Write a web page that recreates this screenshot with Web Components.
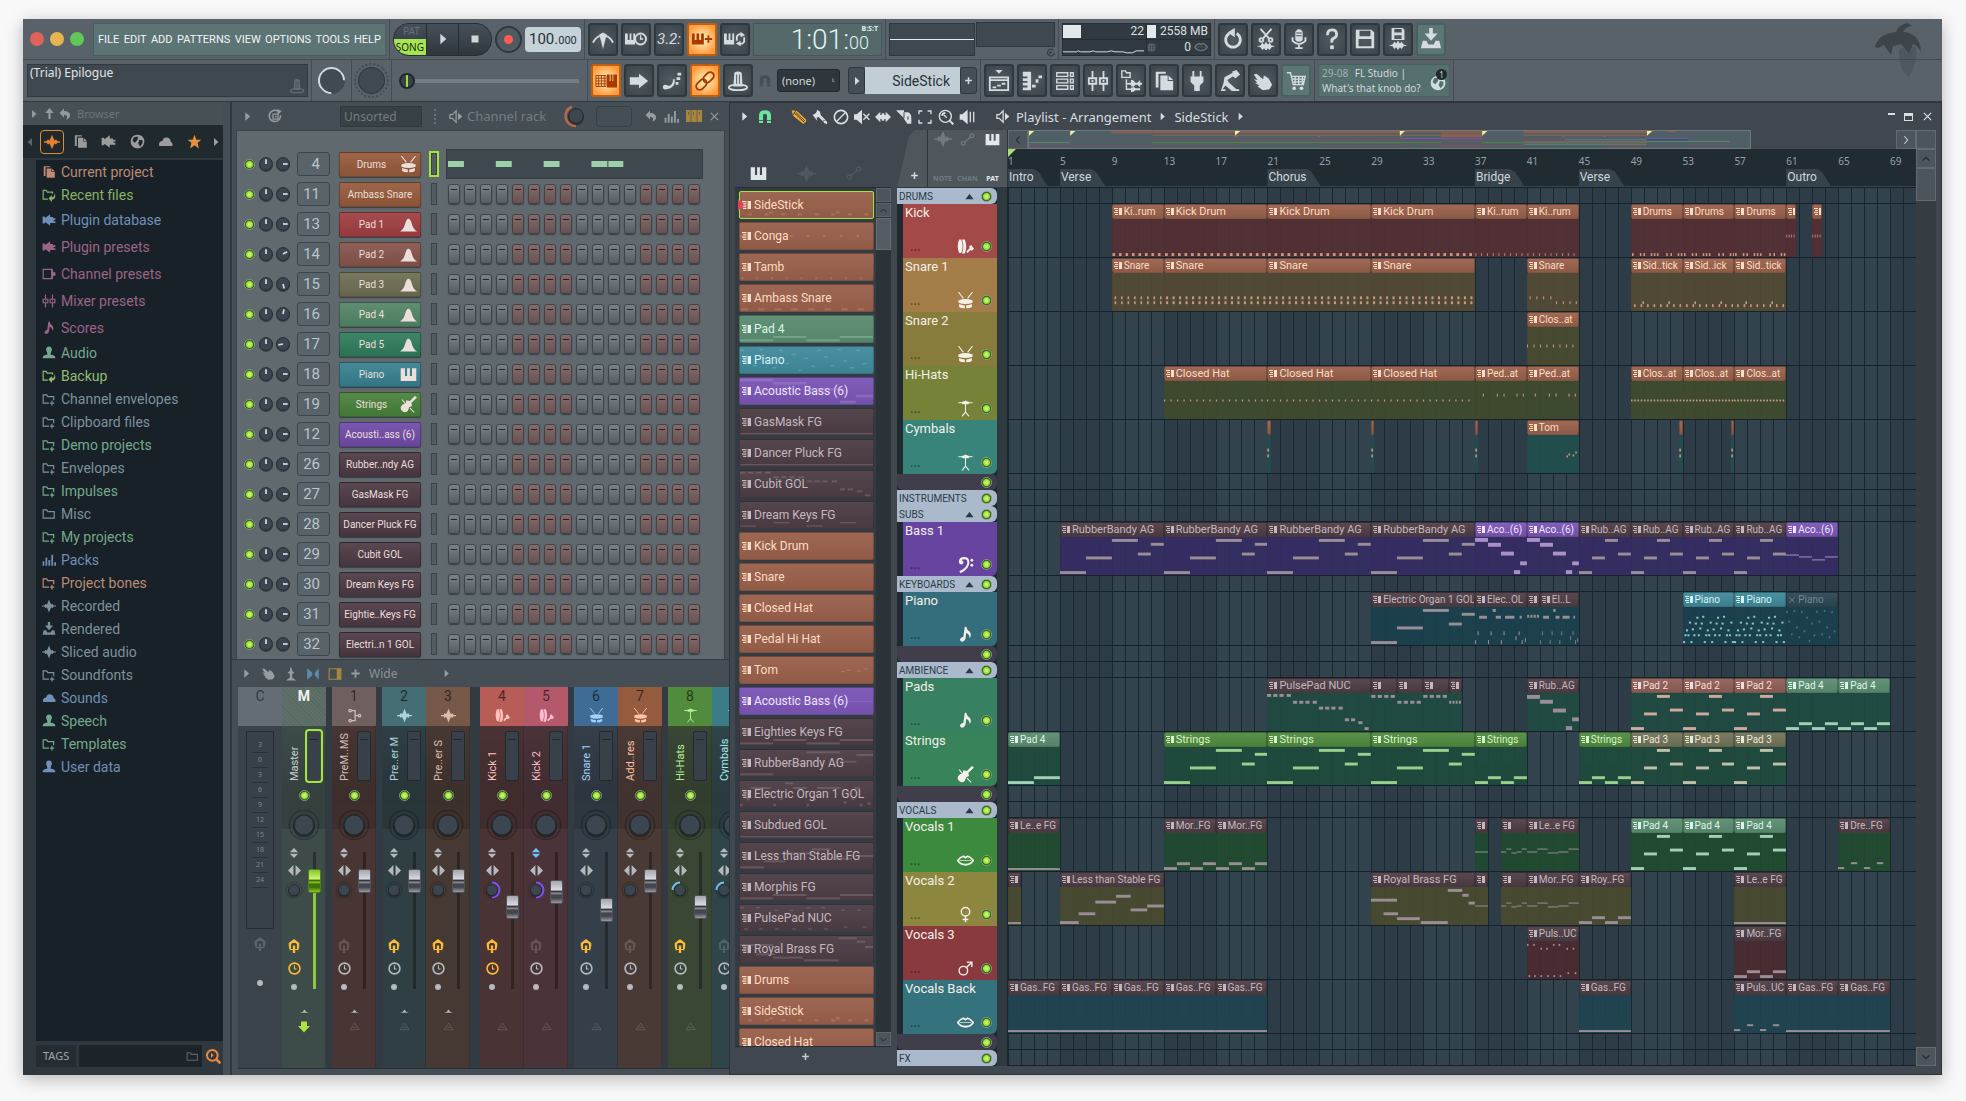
<!DOCTYPE html>
<html lang="en">
<head>
<meta charset="utf-8">
<title>Epilogue</title>
<style>
  body {
    margin: 0;
    background: #f8f8f8;
    font-family: Roboto, "Noto Sans", sans-serif;
    color: #d3d9dd;
  }
</style>
</head>
<body>
<daw-app></daw-app>
<script>
const WIDE = '"Noto Sans", "Open Sans", sans-serif';

/* ---------- icons, all on a 24 unit square ---------- */
const line = (d, w = 2) => `<path d="${d}" fill="none" stroke="currentColor" stroke-width="${w}"/>`;
const fill = (d) => `<path d="${d}" fill-rule="evenodd"/>`;
const ring = (cx, cy, r, w = 2) => `<circle cx="${cx}" cy="${cy}" r="${r}" fill="none" stroke="currentColor" stroke-width="${w}"/>`;

const ICONS = {
  right: fill("M8 4l9 8-9 8z"),
  left: fill("M16 4l-9 8 9 8z"),
  up: fill("M12 2l8 9h-6v11h-4V11H4z"),
  stop: fill("M5 5h14v14H5z"),
  undo: fill("M10 1v5c8 0 12 4 12 9 0 4-3 7-8 8 4-4 3-9-4-9v5L1 10z"),
  piano: fill("M1 3h6v11h3V3h4v11h3V3h6v18H1z"),
  wave: fill("M0 11h4l2-3 2 2 2-4 2-5 2 5 2 4 2-2 2 3h4v2h-4l-2 3-2-2-2 4-2 5-2-5-2-4-2 2-2-3H0z"),
  metronome: line("M1 16Q5 8 12 8T23 16", 2) + fill("M8 7l4-2 4 2-4 16z"),
  pianoclock: fill("M0 6h3v7h2V6h2v7h2V6h2v12H0z") + ring(17, 12, 6) + line("M17 8v4h3", 1.5),
  pianoplus: fill("M1 6h3v7h2V6h3v7h2V6h3v12H1zM18 8h2v3h3v2h-3v3h-2v-3h-3v-2h3z"),
  pianoloop: fill("M0 6h3v7h2V6h2v7h2V6h2v12H0z") + line("M14 14V9q3-4 7-1M22 10v5q-3 4-7 1", 2) + fill("M18 4l5 4-5 2zM18 14l-5 3 5 3z"),
  keys: line("M1 6h11v12H1zM1 9h11M1 12h11M1 15h11M4 6v12M7 6v12M10 6v12", 1) + fill("M13 5h3v7h1V5h2v7h1V5h4v14H13z"),
  arrow: fill("M2 8h10V4l10 8-10 8v-4H2z"),
  glide: fill("M2 18a3 3 0 0 1 5-1q5 1 6-5v-2h2v4q-1 6-9 7-4 1-4-3zM18 3h4v3h-4zM17 8h4v3h-4zM16 13h3v3h-3z"),
  link: '<g transform="rotate(-45 12 12)">' + '<rect x="0" y="8" width="13" height="8" rx="4" fill="none" stroke="currentColor" stroke-width="2"/><rect x="11" y="8" width="13" height="8" rx="4" fill="none" stroke="currentColor" stroke-width="2"/>' + "</g>",
  jack: fill("M8 3q4-3 8 0l1 15H7zM10 5v11h1V5zM13 5v11h1V5z") + '<ellipse cx="12" cy="19" rx="10" ry="3" fill="none" stroke="currentColor" stroke-width="2"/>',
  magnet: fill("M3 21V10Q3 2 12 2t9 8v11h-6V10q0-3-3-3t-3 3v11zM3 17h6v1H3zM15 17h6v1h-6z"),
  step: fill("M8 0h8l-4 4z") + line("M2 8h20v14H2zM2 11h20", 2) + fill("M5 18h4v2H5zM10 16h4v2h-4zM15 14h4v2h-4z"),
  roll: fill("M2 2h9v20H2v-3h5v-2H2v-3h5v-2H2V9h5V7H2zM12 16h4v3h-4zM16 10h3v4h-3zM19 6h4v3h-4z"),
  rack: line("M3 3h12v4H3zM18 3h3v4h-3zM3 10h12v4H3zM18 10h3v4h-3zM3 17h12v4H3zM18 17h3v4h-3z", 1.5),
  mixer: line("M6 1v8M6 15v8M18 1v8M18 15v8M2 9h8v6H2zM14 9h8v6h-8z", 2) + fill("M5 11h2v2H5zM17 11h2v2h-2z"),
  tree: line("M2 1h4l1 2h4v5H2zM7 10v11h5M7 15h5", 1.5) + fill("M12 11h2l3 3h2l3-3v3h2v2h-2v3l-3-3h-2l-3 3h-2v-3h-2v-2h2zM12 18h2l3 2h5v2h-5l-3 2h-2z"),
  pages: fill("M3 2h11v2H6v15H3zM8 6h8v6h6v10H8zM17 6l5 5h-5z"),
  plug: fill("M7 1h2v6h6V1h2v6h2v6l-4 4v6H9v-6l-4-4V7h2z"),
  tool: fill("M14 2l5-2 4 5-5 4-3-2-6 4 2 3 8 7h3v2h-8l-7-6-3 4h3v2H2l3-9 1-6 9-5z"),
  hand: fill("M2 5l3-1 7 6 1-4 5 3 4 7-3 5-7 1-6-4 2-1-5-3 3 0-4-4 4 1z"),
  cart: line("M2 3h4l3 13h11l2-9H7M8 10h13M9 13h11M11 7v9M15 7v9M19 7v9", 1.5) + '<circle cx="10" cy="20" r="2"/><circle cx="18" cy="20" r="2"/>',
  redo: line("M8 6a8 8 0 1 0 8 0", 3) + fill("M6 5l8-5v10z"),
  cut: line("M6 1l9 10M18 1L9 11", 2) + ring(7, 13, 2) + ring(17, 13, 2) + fill("M2 20l4-1 2-3 2 2 2-3 2 3 2-2 2 3 4 1-4 1-2 3-2-2-2 3-2-3-2 2-2-3z"),
  mic: fill("M8 4q4-6 8 0v9q-4 4-8 0zM9 5v1h6V5zM9 8v1h6V8z") + line("M5 10v4q7 7 14 0v-4M12 17v5M8 22h8", 2),
  help: line("M7 8q0-6 5-6t5 5q0 3-3 4t-2 5", 3) + fill("M10 19h4v4h-4z"),
  save: fill("M2 2h17l3 3v17H2zM6 3v6h12V3zM5 12v8h14v-8z"),
  savewave: fill("M5 0h12l2 2v11H5zM8 1v4h8V1zM8 8v4h8V8zM2 19l4-1 2-3 2 2 2-3 2 3 2-2 2 3 4 1-4 1-2 3-2-2-2 3-2-3-2 2-2-3z"),
  download: fill("M10 0h4v6h5l-7 8-7-8h5zM3 14h4l2 4h6l2-4h4l2 8H1z"),
  speaker: line("M3 9h4l6-6v18l-6-6H3z", 2) + fill("M16 6l7 6-7 6z"),
  mute: fill("M0 8h4l8-7v22l-8-7H0z") + line("M14 7l9 9M23 7l-9 9", 2),
  play2: fill("M1 8h4l8-7v22l-8-7H1zM16 4h2v16h-2zM21 4h2v16h-2z"),
  pencil: fill("M1 2l8 1 14 13q0 5-5 6L3 10z") + '<path d="M5 6l15 14M7 5l14 13M7 3L3 9" fill="none" stroke="#40474e" stroke-width="1.5"/>',
  brush: fill("M1 9l5-3 2-5 4 3 1 5 7 7-3 3-7-7-3 1 1 5zM17 16l5 2 1 5-5-2z"),
  slash: ring(12, 12, 10, 2.5) + line("M5 19L19 5"),
  slip: fill("M0 12l8-8v5h2V7l2-1 2 1v2h2V4l8 8-8 8v-5h-2v2l-2 1-2-1v-2H8v5z"),
  slice: fill("M0 2h12v3h6q5 2 5 8v9h-6l-5-7V14z") + '<path d="M12 5v9M18 11v5" stroke="#40474e" stroke-width="1.5"/>',
  select: line("M3 8V3h5M16 3h5v5M21 16v5h-5M8 21H3v-5", 2),
  zoom: ring(11, 11, 9) + line("M17 17l6 6", 3) + line("M6 10q1-4 5-4", 3) + line("M9 9l4 4", 2),
  auto: ring(5, 18, 3) + ring(19, 6, 3) + line("M7 16l10-8"),
  plugside: fill("M1 6h3l2 2 8-6v5h5v2h4v3h-3v2h3v3h-4v0h-5v5l-8-6-2 2H1z"),
  globe: fill("M12 1a11 11 0 1 0 .1 0zM6 5l7-1-1 5-4 5-4-3zM15 9l5 1 0 5-4 5-3-5z"),
  cloud: fill("M2 19q-2-7 5-8 2-7 9-5 4 1 4 6 4 2 3 7z"),
  star: fill("M12 1l3 8h8l-6 5 2 9-7-5-7 5 2-9-6-5h8z"),
  folderback: line("M10 19H2V4h5l2 3h9v3", 2) + fill("M11 18l6-6v4q5 0 4-8 5 10-4 12v4z"),
  folder: line("M12 19H2V5h6l2 3h10v6", 2) + line("M17 15v8M14 19h7", 2),
  folderplain: line("M2 19V5h6l2 3h11v11z", 2),
  channel: line("M2 4h15v16H2z", 2) + fill("M16 4h3v16h-3zM19 9h4v6h-4z"),
  note: fill("M11 1h2q1 5 5 7 3 4 0 9-1-6-5-7l-1 8q-2 5-6 4-4-3 1-6l2-1z"),
  user: fill("M12 1q5 0 5 6l-2 5v3q8 0 8 6H1q0-6 8-6v-3L7 7q0-6 5-6z"),
  drum: line("M2 0l7 9M22 0l-7 9", 1.5) + fill("M2 12q10-4 20 0v3q-10 4-20 0zM3 17q4 2 8 2v4q-6 0-8-2zM13 19q4 0 8-2v4q-2 2-8 2z"),
  kick: fill("M3 2h3q4 10 0 19H3q-4-9 0-19zM7 2h4q4 10 0 20H7q4-10 0-20zM13 19l5-5-1-2 3-2 4 5-3 3-2-1-4 4z"),
  cymbal: line("M2 4h20M12 1v17M7 23l5-6 5 6", 1.5) + fill("M6 3l6-2 6 2-2 3H8z"),
  bell: fill("M0 22Q5 19 7 12Q9 4 12 4T17 12Q19 19 24 22z"),
  bass: line("M4 9Q4 3 10 3t6 6q0 8-12 14", 3) + '<circle cx="6" cy="9" r="3"/><circle cx="21" cy="6" r="2"/><circle cx="21" cy="13" r="2"/>',
  violin: fill("M21 0l3 2-8 8 1 4-4 2-2 5q-5 4-9-1-3-5 2-8l4-2 1-4 5 1z") + line("M3 5l4 5M14 17l6 6", 1.5),
  mouth: line("M1 12q4-5 8-6l3 2 3-2q4 1 8 6-4 6-11 6T1 12z", 2.5) + line("M4 12h16", 1),
  female: ring(12, 8, 6) + line("M12 14v9M8 19h8"),
  male: ring(9, 15, 6) + line("M13 11l8-8M14 3h7v7"),
  route: ring(5, 4, 2) + ring(5, 20, 2) + ring(20, 12, 2) + line("M7 4h6v16H7M13 12h5"),
  swap: fill("M2 2l9 8v4l-9 8zM22 2l-7 8v4l7 8z"),
  dock: line("M2 3h20v18H2z", 2) + fill("M15 3h7v18h-7z"),
  stand: fill("M11 1h2l1 6 4 3-4 2v6l7 5H3l7-5v-6l-4-2 4-3z"),
  plus: fill("M10 3h4v7h7v4h-7v7h-4v-7H3v-4h7z"),
  bars: fill("M1 14h3v8H1zM6 8h3v14H6zM11 12h3v10h-3zM16 3h3v19h-3zM21 16h3v6h-3z"),
  steps: fill("M0 3h7v18H0zM8 3h8v18H8zM17 3h7v18h-7zM3 6v4h1V6zM11 6v4h1V6zM20 6v4h1V6z"),
  close: line("M4 4l16 16M20 4L4 20", 2.5),
  chip: line("M5 3h14v18H5zM1 7h4M1 12h4M1 17h4M19 7h4M19 12h4M19 17h4M8 3v18M12 3v18M16 3v18", 2),
  eye: line("M20 8a8 8 0 1 0 2 5", 3) + '<circle cx="13" cy="13" r="3"/>',
  spin: line("M20 10a9 9 0 1 1-5-7", 2.5) + fill("M14 0l8 3-6 6z") + line("M8 8h8v8H8zM11 12h3", 2),
  mag: ring(11, 11, 8, 3) + line("M17 17l6 6", 4) + fill("M9 7l4 4-4 4z"),
  vsplit: fill("M12 0l10 10H2zM2 14h20L12 24z"),
  hsplit: fill("M10 2v20L0 12zM14 2l10 10-10 10z"),
  send: fill("M12 0l9 7v6l-2 7-2-2V9l-2-2H9L7 9v9l-2 2-2-7V7zM10 11h4v6h3v2h-3v5h-4v-5H7v-2h3z"),
  clock: ring(12, 12, 10, 3) + line("M12 6v7h4", 2),
  chevup: fill("M0 18q9-2 12-9 3 7 12 9z"),
  tri: line("M12 5l10 14H2zM8 14h8", 2),
  down: fill("M6 1h12v9h6L12 23 0 10h6z"),
  fold: fill("M12 5l11 14H1z"),
  caretup: line("M4 16l8-8 8 8", 2.5),
  caretdown: line("M4 8l8 8 8-8", 2.5),
  caretleft: line("M16 3l-8 9 8 9", 2.5),
  caretright: line("M8 3l8 9-8 9", 2.5),
  pattern: fill("M0 0h12v3H0zM3 6h9v3H3zM0 12h12v3H0zM3 18h9v3H3zM15 0h9v21h-9z")
};

/* ---------- note shapes of a clip, on 100 x 39 units ---------- */
const dots = (n, y, w, h = 3, off = 1) =>
  Array.from({ length: n }, (_, i) => [(i * 100) / n + off, y, w, h]);
const runs = (...ys) => ys.map((y, i) => [(i * 100) / ys.length, y, 100 / ys.length, 3]);
const thin = (...ys) => ys.map((y, i) => [(i * 100) / ys.length, y, 100 / ys.length, 1]);
const scatter = (n, w, rows) => Array.from({ length: n }, (_, i) => [(i * 97) / n, rows[i % rows.length], w, 2]);

const NOTES = {
  none: [],
  kick4: dots(8, 35, 5),
  kick: dots(16, 35, 2.6),
  kicksoft: dots(9, 35, 1.5),
  drums: [2, 17, 24, 38, 44, 50, 68, 76, 90, 96].map((x) => [x, 35, 3, 3]),
  hit: dots(4, 16, 8, 3, 4),
  snare4: dots(8, 24, 3, 3, 5).concat(dots(8, 29, 3, 3, 5)),
  snare: dots(16, 24, 2, 3, 2).concat(dots(16, 29, 2, 3, 2)),
  snaresoft: [[5, 24, 2, 3], [18, 24, 2, 3], [31, 24, 2, 3], [45, 24, 2, 3], [56, 29, 2, 3], [69, 29, 2, 3], [82, 29, 2, 3], [94, 29, 2, 3]],
  side: dots(8, 32, 3, 3, 6).concat([[22, 29, 3, 3], [72, 29, 3, 3]]),
  hat: dots(16, 19, 1.2, 2, 0),
  hat4: dots(16, 19, 3, 2, 0),
  hatsoft: [15, 42, 55, 80, 92].map((x) => [x, 13, 2, 3]),
  clos: dots(8, 18, 2, 3, 0),
  tick: [[10, 14, 50, 3], [10, 20, 50, 3]],
  tom: [[76, 21, 3, 2], [80, 19, 3, 2], [88, 20, 3, 2], [93, 17, 3, 2]],
  riff8: [[0, 35, 25, 3], [25, 20, 25, 3], [50, 2, 25, 3], [75, 16, 12.5, 3], [87.5, 6, 12.5, 3]],
  riff: [[0, 35, 25, 3], [25, 20, 25, 3], [50, 2, 25, 3], [75, 16, 25, 3]],
  aco: [[0, 1, 25, 4], [25, 6, 25, 4], [50, 15, 25, 4], [75, 34, 12, 4], [87, 25, 13, 4]],
  acothin: thin(18, 20, 23, 20),
  pad2: runs(35, 30),
  pad: runs(35, 30, 35, 30),
  pulse: [[0, 1], [6, 1], [12, 1], [19, 1], [25, 8], [31, 8], [37, 8], [44, 8], [50, 14], [56, 14], [62, 14], [69, 14], [75, 26], [81, 26], [88, 29], [94, 35]].map(([x, y]) => [x, y, 4, 3]),
  pulsea: dots(4, 2, 16),
  pulseb: dots(4, 8, 16),
  fall: [[0, 2, 25, 4], [25, 7, 25, 4], [50, 16, 25, 4], [75, 34, 12, 4], [87, 25, 13, 4]],
  organ: [[8, 9, 15, 3], [34, 2, 6, 3], [40, 9, 10, 3], [58, 9, 18, 3], [86, 9, 4, 3]].concat([[0, 34], [5, 25], [25, 34], [30, 25], [50, 34], [55, 25], [78, 30], [84, 25], [90, 34], [96, 32]].map(([x, y]) => [x, y, 2, 4])),
  piano: scatter(34, 4, [35, 28, 23, 28, 15, 35, 22, 28, 16, 10, 28, 21, 16, 9]),
  pianosoft: scatter(20, 3, [4, 14, 27, 3, 20, 30, 4, 24, 10, 34, 16, 28]),
  less: thin(19, 16, 20, 19, 16),
  short: thin(19),
  low: [[0, 36, 100, 2]],
  stable: [[0, 35, 18, 3], [18, 26, 16, 3], [34, 14, 20, 3], [54, 8, 14, 3], [68, 22, 16, 3], [84, 18, 16, 3]],
  royal: [[0, 12, 25, 3], [12, 26, 14, 3], [25, 31, 22, 3], [48, 35, 26, 3], [74, 2, 14, 3], [88, 7, 6, 3], [94, 15, 6, 3]],
  dots3: [0, 12, 26, 37, 50, 61, 76, 88].map((x, i) => [x, i % 4 < 2 ? 3 : 7, 3, 2]).concat([3, 14, 26, 39, 51, 63, 78, 92].map((x, i) => [x, i < 6 ? 35 : 32, 3, 2])),
  blips: [[0, 35, 12, 2], [25, 30, 12, 2], [50, 35, 12, 2], [75, 30, 12, 2]]
};

/* clip head, clip text, notes */
const COLORS = {
  orange: ["#98604a", "#ffdcc4", "#d6a48a"],
  dark: ["#4d3c44", "#c4b8be", "#a5979f"],
  purple: ["#7a55b4", "#f0e4ff", "#b79ad6"],
  green: ["#4f8a3f", "#d8f5c8", "#a5e094"],
  sage: ["#5a8c70", "#dcf5e6", "#aee0c4"],
  rose: ["#8e5e56", "#f5dcd6", "#e0b4a8"],
  olive: ["#717259", "#e8e8d4", "#cfcfb4"],
  cyan: ["#40899a", "#d4f4fa", "#8fdadf"],
  mute: ["#2c4652", "#71868f", "#557782"]
};

/* ---------- song data: [name, colour, bar, bars, notes] ---------- */
const at = (name, color, notes, len, ...bars) => bars.map((b) => [name, color, b, len, notes]);
const TRACKS = [
  { group: "DRUMS", fold: true },
  { name: "Kick", color: "#a34a49", body: "#552e34", icon: "kick", clips: [
    ...at("Ki..rum", "orange", "kick4", 4, 9), ...at("Kick Drum", "orange", "kick", 8, 13, 21, 29),
    ...at("Ki..rum", "orange", "kicksoft", 4, 37, 41), ...at("Drums", "orange", "drums", 4, 49, 53, 57),
    ...at("", "orange", "hit", 0.75, 61, 63)] },
  { name: "Snare 1", color: "#a37c48", body: "#544a33", icon: "drum", clips: [
    ...at("Snare", "orange", "snare4", 4, 9), ...at("Snare", "orange", "snare", 8, 13, 21, 29),
    ...at("Snare", "orange", "snaresoft", 4, 41), ...at("Sid..tick", "orange", "side", 4, 49),
    ...at("Sid..ick", "orange", "side", 4, 53), ...at("Sid..tick", "orange", "side", 4, 57)] },
  { name: "Snare 2", color: "#877c3c", body: "#484b2e", icon: "drum", clips: at("Clos..at", "orange", "clos", 4, 41) },
  { name: "Hi-Hats", color: "#758238", body: "#404b2c", icon: "cymbal", clips: [
    ...at("Closed Hat", "orange", "hat", 8, 13, 21, 29), ...at("Ped..at", "orange", "hatsoft", 4, 37, 41),
    ...at("Clos..at", "orange", "hat4", 4, 49, 53, 57)] },
  { name: "Cymbals", color: "#38847a", body: "#20504e", icon: "cymbal", last: true, clips: [
    ...at("", "orange", "tick", 0.25, 21, 29, 37, 52.75, 56.75), ...at("Tom", "orange", "tom", 4, 41)] },
  { blank: true },
  { group: "INSTRUMENTS" },
  { group: "SUBS", fold: true },
  { name: "Bass 1", color: "#6644a0", body: "#362c64", icon: "bass", last: true, clips: [
    ...at("RubberBandy AG", "dark", "riff8", 8, 5, 13, 21, 29), ...at("Aco..(6)", "purple", "aco", 4, 37, 41),
    ...at("Rub..AG", "dark", "riff", 4, 45, 49, 53, 57), ...at("Aco..(6)", "purple", "acothin", 4, 61)] },
  { group: "KEYBOARDS", fold: true },
  { name: "Piano", color: "#346e7c", body: "#1b404e", icon: "note", last: true, clips: [
    ...at("Electric Organ 1 GOL", "dark", "riff8", 8, 29), ...at("Elec..OL", "dark", "organ", 4, 37),
    ...at("", "dark", "pulseb", 1, 41), ...at("El..L", "dark", "organ", 3, 42),
    ...at("Piano", "cyan", "piano", 4, 53, 57), ...at("Piano", "mute", "pianosoft", 4, 61)] },
  { blank: true },
  { group: "AMBIENCE", fold: true },
  { name: "Pads", color: "#378062", body: "#1f4b41", icon: "note", clips: [
    ...at("PulsePad NUC", "dark", "pulse", 8, 21), ...at("", "dark", "pulsea", 2, 29), ...at("", "dark", "pulseb", 2, 31),
    ...at("", "dark", "pulsea", 2, 33), ...at("", "dark", "pulseb", 1, 35), ...at("Rub..AG", "dark", "fall", 4, 41),
    ...at("Pad 2", "rose", "riff", 4, 49, 53, 57), ...at("Pad 4", "sage", "pad", 4, 61, 65)] },
  { name: "Strings", color: "#37845a", body: "#1f4b3c", icon: "violin", last: true, clips: [
    ...at("Pad 4", "sage", "pad2", 4, 1), ...at("Strings", "green", "riff8", 8, 13, 21, 29),
    ...at("Strings", "green", "pad", 4, 37, 45), ...at("Pad 3", "olive", "riff", 4, 49, 53, 57)] },
  { blank: true },
  { group: "VOCALS", fold: true },
  { name: "Vocals 1", color: "#3c8a3e", body: "#204b2f", icon: "mouth", clips: [
    ...at("Le..e FG", "dark", "low", 4, 1), ...at("Mor..FG", "dark", "pad", 4, 13, 17),
    ...at("", "dark", "short", 1, 37), ...at("", "dark", "less", 2, 39), ...at("Le..e FG", "dark", "less", 4, 41),
    ...at("Pad 4", "sage", "riff", 4, 49, 53, 57), ...at("Dre..FG", "dark", "blips", 4, 65)] },
  { name: "Vocals 2", color: "#8d863e", body: "#4a4b2e", icon: "female", clips: [
    ...at("", "dark", "low", 1, 1), ...at("Less than Stable FG", "dark", "stable", 8, 5),
    ...at("Royal Brass FG", "dark", "royal", 8, 29), ...at("", "dark", "short", 1, 37), ...at("", "dark", "less", 2, 39),
    ...at("Mor..FG", "dark", "less", 4, 41), ...at("Roy..FG", "dark", "pad", 4, 45), ...at("Le..e FG", "dark", "low", 4, 57)] },
  { name: "Vocals 3", color: "#883a3e", body: "#4c2a30", icon: "male", clips: [
    ...at("Puls..UC", "dark", "dots3", 4, 41), ...at("Mor..FG", "dark", "pad", 4, 57)] },
  { name: "Vocals Back", color: "#34727e", body: "#1f4450", icon: "mouth", last: true, clips: [
    ...at("Gas..FG", "dark", "low", 4, 1, 5, 9, 13, 17, 45), ...at("Puls..UC", "dark", "blips", 4, 57),
    ...at("Gas..FG", "dark", "low", 4, 61, 65)] },
  { blank: true },
  { group: "FX" }
];

const PATTERNS = [
  ["SideStick", "orange", "side"], ["Conga", "orange", "clos"], ["Tamb", "orange", "kicksoft"], ["Ambass Snare", "orange", "kick4"],
  ["Pad 4", "sage", "pad"], ["Piano", "cyan", "pianosoft"], ["Acoustic Bass (6)", "purple", "aco"],
  ["GasMask FG", "dark", "low"], ["Dancer Pluck FG", "dark", "low"], ["Cubit GOL", "dark", "pulse"], ["Dream Keys FG", "dark", "blips"],
  ["Kick Drum", "orange", "none"], ["Snare", "orange", "none"], ["Closed Hat", "orange", "none"], ["Pedal Hi Hat", "orange", "none"],
  ["Tom", "orange", "tom"], ["Acoustic Bass (6)", "purple", "acothin"], ["Eighties Keys FG", "dark", "pad"],
  ["RubberBandy AG", "dark", "riff8"], ["Electric Organ 1 GOL", "dark", "organ"], ["Subdued GOL", "dark", "low"],
  ["Less than Stable FG", "dark", "stable"], ["Morphis FG", "dark", "pad"], ["PulsePad NUC", "dark", "dots3"],
  ["Royal Brass FG", "dark", "royal"], ["Drums", "orange", "none"], ["SideStick", "orange", "side"], ["Closed Hat", "orange", "none"]
];

const CHANNELS = [
  [4, "Drums", "#95593a", 90, "drum"], [11, "Ambass Snare", "#95593a", 90], [13, "Pad 1", "#9e3d40", 90, "bell"],
  [14, "Pad 2", "#855349", 60, "bell"], [15, "Pad 3", "#6c6c50", 165, "bell"], [16, "Pad 4", "#518465", 12, "bell"],
  [17, "Pad 5", "#2e7a5a", 260, "bell"], [18, "Piano", "#367e8e", 90, "piano"], [19, "Strings", "#467f38", 90, "violin"],
  [12, "Acousti..ass (6)", "#6e4aa6", 90], [26, "Rubber..ndy AG", "#4b3842", 90], [27, "GasMask FG", "#4b3842", 90],
  [28, "Dancer Pluck FG", "#4b3842", 90], [29, "Cubit GOL", "#4b3842", 90], [30, "Dream Keys FG", "#4b3842", 90],
  [31, "Eightie..Keys FG", "#4b3842", 90], [32, "Electri..n 1 GOL", "#4b3842", 90]
];

const STRIPS = [
  { no: "M", name: "Master", head: "#5f7069", body: "#3d4b49", text: "#c4d4cc", fader: 85, master: true, send: 1, clock: 1, up: 1 },
  { gap: 6 },
  { no: "1", name: "PreM..MS", head: "#6f5f5f", body: "#473633", text: "#d4bdb8", icon: "route", fader: 85, up: 1 },
  { gap: 6 },
  { no: "2", name: "Pre..er M", head: "#456d74", body: "#2f3f44", text: "#a8d4dc", icon: "wave", fader: 85, send: 1, up: 1 },
  { no: "3", name: "Pre..er S", head: "#765848", body: "#463833", text: "#dcbca8", icon: "wave", fader: 85, send: 1, up: 1 },
  { gap: 10 },
  { no: "4", name: "Kick 1", head: "#b85c58", body: "#4a3335", text: "#ffc4bc", icon: "kick", fader: 62, send: 1, clock: 1, ring: "#7c50ff" },
  { no: "5", name: "Kick 2", head: "#b4586c", body: "#4a3339", text: "#ffbcd0", icon: "kick", fader: 75, ring: "#7c50ff", stereo: true },
  { gap: 6 },
  { no: "6", name: "Snare 1", head: "#3f6c94", body: "#343f4a", text: "#a4d0ff", icon: "drum", fader: 59, send: 1 },
  { no: "7", name: "Add..res", head: "#945b3f", body: "#4a3a36", text: "#ffc4a4", icon: "drum", fader: 85 },
  { gap: 6 },
  { no: "8", name: "Hi-Hats", head: "#538b3e", body: "#3a4735", text: "#b0f494", icon: "cymbal", fader: 62, send: 1, ring: "#70c0e8" },
  { no: "", name: "Cymbals", head: "#3b7d87", body: "#304549", text: "#a4e8f0", icon: "cymbal", fader: 62, ring: "#70c0e8" }
];

const FOLDERS = [
  ["Current project", "pages", "#bd8b75"], ["Recent files", "folderback", "#86b268"],
  ["Plugin database", "plugside", "#6f90b8", 1], ["Plugin presets", "plugside", "#9c6488", 1],
  ["Channel presets", "channel", "#9c6488", 1], ["Mixer presets", "mixer", "#9c6488", 1], ["Scores", "note", "#9c6488", 1],
  ["Audio", "user", "#74a98c"], ["Backup", "folderback", "#94bc70"], ["Channel envelopes", "folder", "#7c919c"],
  ["Clipboard files", "folder", "#7c919c"], ["Demo projects", "folder", "#74a98c"], ["Envelopes", "folder", "#7c919c"],
  ["Impulses", "folder", "#74a98c"], ["Misc", "folderplain", "#7c919c"], ["My projects", "folder", "#74a98c"],
  ["Packs", "bars", "#6f90b8"], ["Project bones", "folder", "#bd8b75"], ["Recorded", "wave", "#7c919c"],
  ["Rendered", "download", "#7c919c"], ["Sliced audio", "wave", "#7c919c"], ["Soundfonts", "folder", "#7c919c"],
  ["Sounds", "cloud", "#6f90b8"], ["Speech", "user", "#74a98c"], ["Templates", "folder", "#74a98c"], ["User data", "user", "#6f90b8"]
];

/* ---------- base ---------- */
class DawElement extends HTMLElement {
  constructor() {
    super();
    this.attachShadow({ mode: "open" });
  }

  connectedCallback() {
    this.shadowRoot.innerHTML = `
      <style>
        * { box-sizing: border-box; }
        :host { display: block; box-sizing: border-box; min-width: 0; }
        button, input, select { font: inherit; color: inherit; margin: 0; padding: 0; border: 0; background: none; border-radius: 0; }
        button { display: flex; align-items: center; justify-content: center; }
        ${this.styles()}
      </style>
      ${this.markup()}`;
  }

  attr(name, fallback = "") {
    return this.getAttribute(name) || fallback;
  }

  styles() { return ""; }
  markup() { return "<slot></slot>"; }
}

const icon = (name, size = 16, extra = "") => `<daw-icon name="${name}" size="${size}" ${extra}></daw-icon>`;

function noteShapes(name, color, opacity = 1) {
  const rects = NOTES[name].map(([x, y, w, h]) => `<rect x="${x}" y="${y}" width="${w}" height="${h}"/>`).join("");
  return `<svg viewBox="0 0 100 39" preserveAspectRatio="none" fill="${color}" opacity="${opacity}" aria-hidden="true">${rects}</svg>`;
}

class DawIcon extends DawElement {
  styles() {
    return `:host { flex: none; width: ${this.attr("size", 16)}px; height: ${this.attr("size", 16)}px; }
      svg { display: block; width: 100%; height: 100%; }`;
  }
  markup() {
    return `<svg viewBox="0 0 24 24" fill="currentColor" aria-hidden="true">${ICONS[this.attr("name")]}</svg>`;
  }
}

class DawLed extends DawElement {
  styles() {
    return `:host {
      flex: none; width: 11px; height: 11px; border-radius: 50%;
      border: 1px solid #88988c;
      background: radial-gradient(circle, #c8f070 0 20%, #8fdc2c 48%, #224a10 68%);
    }`;
  }
  markup() { return ""; }
}

class DawKnob extends DawElement {
  styles() {
    const s = this.attr("size", 14);
    return `:host { flex: none; width: ${s}px; height: ${s}px; }
      svg { display: block; overflow: visible; }`;
  }
  markup() {
    const s = this.attr("size", 14);
    const arc = this.attr("ring");
    const half = this.attr("half", "right");
    return `<svg width="${s}" height="${s}" viewBox="0 0 24 24">
      ${this.hasAttribute("halo") ? '<circle cx="12" cy="12" r="16" fill="none" stroke="#0004" stroke-width="1.5"/>' : ""}
      ${arc ? `<path d="${half === "right" ? "M12-3a15 15 0 0 1 0 30" : half === "left" ? "M12 27a15 15 0 0 1-6-29" : "M-3 12a15 15 0 0 1 15-15"}" fill="none" stroke="${arc}" stroke-width="4"/>` : ""}
      <circle cx="12" cy="14" r="12" fill="#0005"/>
      <circle cx="12" cy="12" r="11" fill="#3c4650" stroke="#20282e" stroke-width="1.5"/>
      ${this.hasAttribute("angle") ? `<path d="M12 4v8" stroke="#d0d8dc" stroke-width="3" transform="rotate(${this.attr("angle")} 12 12)"/>` : ""}
    </svg>`;
  }
}

/* Square toolbar button, kind: "", "on" or "teal" */
class ToolButton extends DawElement {
  styles() {
    return `
      :host { flex: none; width: 30px; height: 33px; }
      button {
        width: 100%; height: 100%;
        border: 2px solid #30383f; border-radius: 3px;
        background: radial-gradient(circle, #525b62, #3b444b);
        color: #d5dce0;
      }
      :host([kind="on"]) button {
        border-color: #c0600f; color: #a83a00;
        background: radial-gradient(circle, #ffe2a4 20%, #ff9a3c 80%);
      }
      :host([kind="teal"]) button { background: #5b7674; border-color: #466260; }
      ::slotted(i) { font-size: 15px; }`;
  }
  markup() { return `<button aria-label="${this.attr("label")}"><slot></slot></button>`; }
}

const tool = (name, kind = "") =>
  `<tool-button kind="${kind}" label="${name}">${icon(name, 22)}</tool-button>`;

/* ---------- toolbars ---------- */
class MainToolbar extends DawElement {
  styles() {
    return `
      :host { display: flex; height: 41px; border-bottom: 1px solid #434c54; background: #5a6269; }
      .cell { display: flex; align-items: center; gap: 3px; padding: 3px; border-right: 1px solid #434c54; }
      .lights { gap: 6px; border: 0; padding: 0 9px 0 7px; width: 70px; }
      .lights button { width: 14px; height: 14px; border-radius: 50%; }
      nav {
        display: flex; justify-content: space-between; align-items: center;
        width: 293px; height: 33px; padding: 0 4px;
        background: #5d7474; border: 1px solid #48605f;
        font-size: 11px; color: #f0f6f6;
      }
      .transport { display: flex; border-radius: 16px; overflow: hidden; border: 1px solid #262e34; width: 99px; height: 33px; gap: 1px; background: #262e34; }
      .transport > * { flex: 1; background: linear-gradient(#47505a, #2f373d); color: #d0d5d8; }
      .transport .mode { display: flex; flex-direction: column; align-items: stretch; font: 10px/16px ${WIDE}; text-align: center; }
      .mode span { color: #687077; padding-left: 3px; }
      .mode b { font-weight: 400; color: #1a2a08; background: #a6e454; }
      .record { width: 27px; height: 27px; border-radius: 50%; border: 2px solid #30383e; background: #515a61; }
      .record::before { content: ""; width: 9px; height: 9px; border-radius: 50%; background: #ff5c54; }
      .tempo { width: 56px; height: 25px; line-height: 25px; border-radius: 4px; background: #c5d2d8; color: #283238; font-size: 15px; padding-left: 4px; white-space: nowrap; }
      .tempo small { font-size: 11px; }
      .time { display: flex; align-items: baseline; justify-content: flex-end; position: relative; width: 129px; height: 33px; padding-right: 12px; background: #55696a; border: 1px solid #445858; color: #dff4f2; font-size: 28px; line-height: 32px; font-weight: 300; }
      .time small { font-size: 18px; }
      .time sup { position: absolute; right: 3px; top: 0; font: bold 7px/10px ${WIDE}; }
      .scope { width: 86px; height: 33px; border: 1px solid #30383f; background: linear-gradient(#d8f0f0, #d8f0f0) 0 50% / 100% 1px no-repeat #40484f; }
      .peak { display: flex; flex-direction: column; align-items: flex-end; width: 77px; color: #343c43; }
      .peak::before { content: ""; width: 77px; height: 23px; background: #40484f; border: 1px solid #30383f; }
      .cpu { display: grid; grid-template: 15px 15px / 83px 63px; width: 149px; height: 33px; padding: 1px; gap: 1px; background: #262e34; font-size: 12px; line-height: 15px; color: #d8e0e4; white-space: nowrap; }
      .cpu > * { display: flex; align-items: center; justify-content: flex-end; gap: 3px; background: #323a41; padding-right: 2px; }
      .cpu .load { justify-content: space-between; }
      .cpu .load::before { content: ""; width: 18px; height: 13px; background: #e2e8ea; }
      .cpu .mem::before { width: 9px; }
      .cpu .dim { color: #687076; }
      .cpu .zero { flex: 1; text-align: right; }
      .cpu svg { width: 82px; height: 14px; }
      .fruit { margin-left: auto; width: 68px; color: #3d454b; }
      .fruit svg { display: block; width: 48px; height: 60px; position: relative; z-index: 1; }`;
  }
  markup() {
    const menu = ["FILE", "EDIT", "ADD", "PATTERNS", "VIEW", "OPTIONS", "TOOLS", "HELP"];
    return `
      <div class="cell lights">
        <button aria-label="Close" style="background:#e0635a"></button>
        <button aria-label="Minimize" style="background:#e6b450"></button>
        <button aria-label="Zoom" style="background:#5fc858"></button>
      </div>
      <div class="cell" style="padding-left:0"><nav>${menu.map((m) => `<button>${m}</button>`).join("")}</nav></div>
      <div class="cell">
        <div class="transport">
          <button class="mode"><span>PAT</span><b>SONG</b></button>
          <button aria-label="Play">${icon("right", 16)}</button>
          <button aria-label="Stop">${icon("stop", 12)}</button>
        </div>
        <button class="record" aria-label="Record"></button>
        <div class="tempo">100.<small>000</small></div>
      </div>
      <div class="cell">${tool("metronome")}${tool("pianoclock")}<tool-button label="Countdown"><i>3.2:</i></tool-button>${tool("pianoplus", "on")}${tool("pianoloop")}
        <div class="time">1:01:<small>00</small><sup>B:S:T</sup></div>
      </div>
      <div class="cell"><div class="scope"></div><div class="peak">${icon("eye", 10)}</div></div>
      <div class="cell">
        <div class="cpu">
          <div class="load">22</div><div class="load mem">2558 MB</div>
          <div><svg viewBox="0 0 84 14">${line("M0 12h14l2-1 2 1h10l3-1 3 1h12l4-1 4 1h8l4 1 6 0 4-2 8 0", 1)}</svg></div>
          <div><span class="dim">${icon("chip", 9)}</span><span class="zero">0</span><span class="dim">${icon("mouth", 14)}</span></div>
        </div>
      </div>
      <div class="cell" style="border:0">${["redo", "cut", "mic", "help", "save", "savewave"].map((n) => tool(n)).join("")}${tool("download", "teal")}</div>
      <div class="fruit"><svg viewBox="0 0 48 60" fill="currentColor" aria-hidden="true">
        <path d="M25 30q10-5 17-2 2 14-7 30-11-8-10-28z" opacity=".35"/>
        <path d="M1 28Q4 15 22 13 24 6 34 4l4 3q-7 1-9 6 17 1 18 20-4-7-8-8l-4 9-8-9-8 2-2 9-7-10-6 3z"/>
      </svg></div>`;
  }
}

class SubToolbar extends DawElement {
  styles() {
    return `
      :host { display: flex; height: 41px; background: #5a6269; }
      .cell { display: flex; align-items: center; justify-content: center; gap: 3px; padding: 3px; border-right: 1px solid #434c54; }
      .title { display: flex; justify-content: space-between; align-items: flex-start; width: 281px; height: 33px; padding: 0 2px 2px; background: #40484f; border: 1px solid #323a40; font: 12px/16px ${WIDE}; color: #e0e5e8; }
      .title daw-icon { align-self: flex-end; color: #636c73; }
      .knob { width: 40px; }
      .dial { width: 27px; height: 27px; border-radius: 50%; background: #414a51; border: 2px solid #d0dade; border-right-color: #414a51; transform: rotate(45deg); }
      .dial.dim { border: 1px solid #30383e; outline: 2px dotted #434b52; outline-offset: 2px; }
      .pitch { width: 196px; padding: 0 8px 0 7px; }
      input[type=range] { appearance: none; width: 100%; height: 24px; background: linear-gradient(#747c83, #747c83) 50% 50% / 100% 4px no-repeat; }
      input[type=range]::-webkit-slider-thumb { appearance: none; width: 16px; height: 16px; border-radius: 50%; border: 2px solid #20282d; background: linear-gradient(90deg, transparent 5px, #9ae040 5px 7px, transparent 7px) #39424a; }
      .snap { color: #454e55; width: 18px; display: flex; justify-content: center; }
      select { appearance: none; width: 63px; height: 23px; padding-left: 4px; border: 1px solid #22292e; border-radius: 3px; background: linear-gradient(to top right, #687077 50%, transparent 50%) 54px 8px / 4px 4px no-repeat, #30373c; font: 11px ${WIDE}; color: #d0d6da; }
      .pattern { display: flex; height: 27px; margin-left: 5px; }
      .pattern button { width: 17px; border: 1px solid #30383f; border-radius: 3px; background: #454e55; color: #d5dce0; }
      .pattern input { width: 95px; padding-right: 10px; background: #c2ced5; color: #283238; font-size: 14px; text-align: right; }
      .news { display: flex; justify-content: space-between; align-items: center; width: 132px; height: 33px; padding: 0 3px; background: #567070; border: 1px solid #466060; color: #cfdcdc; font: 10px/15px ${WIDE}; white-space: nowrap; }
      .news span { color: #9fb0b0; margin-right: 4px; }
      .globe { position: relative; align-self: flex-end; margin-bottom: 5px; }
      .globe b { position: absolute; right: -1px; top: -6px; width: 11px; height: 11px; border-radius: 50%; background: #20282c; font: 8px/11px ${WIDE}; text-align: center; }`;
  }
  markup() {
    return `
      <div class="cell" style="padding-left:4px"><div class="title">(Trial) Epilogue ${icon("jack", 16)}</div></div>
      <div class="cell knob"><div class="dial"></div></div>
      <div class="cell knob"><div class="dial dim"></div></div>
      <div class="cell pitch"><input type="range" value="0" aria-label="Main pitch"></div>
      <div class="cell">${tool("keys", "on")}${tool("arrow")}${tool("glide")}${tool("link", "on")}${tool("jack")}
        <span class="snap">${icon("magnet", 14)}</span>
        <select aria-label="Snap"><option>(none)</option></select>
        <div class="pattern">
          <button aria-label="Previous pattern">${icon("right", 12)}</button>
          <input value="SideStick" aria-label="Pattern">
          <button aria-label="Add pattern">${icon("plus", 9)}</button>
        </div>
      </div>
      <div class="cell">${["step", "roll", "rack", "mixer", "tree", "pages", "plug", "tool", "hand"].map((n) => tool(n)).join("")}${tool("cart", "teal")}</div>
      <div class="cell"><div class="news"><div><span>29-08</span> FL Studio |<br>What's that knob do?</div><div class="globe">${icon("globe", 16)}<b>1</b></div></div></div>`;
  }
}

/* ---------- browser ---------- */
class BrowserPanel extends DawElement {
  styles() {
    return `
      :host { display: flex; flex-direction: column; background: #2f383e; border-right: 7px solid #454e54; }
      header { display: flex; align-items: center; gap: 3px; height: 23px; padding-left: 5px; background: #465055; color: #929a9f; font: 11px ${WIDE}; }
      header span { color: #6d767b; margin-left: 3px; }
      .tabs { display: flex; align-items: center; justify-content: space-between; height: 33px; padding: 0 2px; background: #20292e; color: #9c9c9c; }
      .tabs button { width: 24px; height: 24px; }
      .tabs .edge { width: 10px; }
      .tabs .on { border: 1px solid #e08a3a; border-radius: 4px; color: #e8822c; }
      ul { flex: 1; margin: 2px 0 0 13px; padding: 0; list-style: none; background: #182127; }
      li { display: flex; align-items: center; gap: 5px; height: 23px; padding-left: 6px; font-size: 14px; }
      li.tall { height: 27px; }
      footer { display: flex; align-items: center; height: 34px; padding: 0 2px 4px 13px; gap: 3px; font: 11px ${WIDE}; color: #a0a8ac; }
      footer label { padding: 0 7px; background: #252d32; height: 22px; line-height: 22px; }
      footer .box { display: flex; align-items: center; flex: 1; height: 22px; background: #1c2429; color: #5c666c; padding-right: 3px; }
      footer input { flex: 1; width: 20px; }`;
  }
  markup() {
    return `
      <header>${icon("right", 12)}${icon("up", 13)}${icon("undo", 12)}<span>Browser</span></header>
      <div class="tabs">
        <button class="edge" aria-label="Scroll left" style="color:#596267">${icon("left", 12)}</button>
        <button class="on" aria-label="All">${icon("wave", 16)}</button>
        ${["pages", "plugside", "globe", "cloud"].map((n) => `<button aria-label="${n}">${icon(n, 15)}</button>`).join("")}
        <button aria-label="Favourites" style="color:#e8903a">${icon("star", 15)}</button>
        <button class="edge" aria-label="Scroll right">${icon("right", 12)}</button>
      </div>
      <ul>${FOLDERS.map(([name, ic, color, tall]) => `<li class="${tall ? "tall" : ""}" style="color:${color}">${icon(ic, 14)}${name}</li>`).join("")}</ul>
      <footer><label for="tags">TAGS</label><div class="box"><input id="tags">${icon("folderplain", 13)}</div><span style="color:#e8883a">${icon("mag", 16)}</span></footer>`;
  }
}

/* ---------- channel rack ---------- */
class ChannelRow extends DawElement {
  styles() {
    return `
      :host { display: grid; grid-template-columns: 10px 19px 17px 7px 33px 9px 82px 10px 6px 1fr; align-items: center; height: 30px; padding-left: 7px; }
      .vol { padding-left: 5px; }
      .pan { padding-left: 3px; }
      .no { grid-column: 5; display: flex; align-items: center; justify-content: flex-end; height: 24px; padding-right: 9px; border: 1px solid #3c454b; border-radius: 3px; font-size: 15px; color: #b9c3c9; background: #59636a; }
      .name { grid-column: 7; height: 25px; padding: 0 3px; border: 1px solid #0004; border-radius: 2px; background: linear-gradient(#ffffff14, #00000010) ${this.attr("color")}; box-shadow: 0 1px 1px #0006; color: #ecdfdb; font-size: 10px; white-space: nowrap; }
      .name span { flex: 1; text-align: center; }
      .sel { grid-column: 9; height: 22px; border: 1px solid #3a434a; background: #525b62; }
      .sel.on { outline: 2px solid #a5e43c; }
      .steps { display: flex; gap: 4px; padding-left: 11px; }
      .steps input { appearance: none; width: 12px; height: 20px; border: 1px solid #3c4449; border-radius: 3px; background: linear-gradient(#20262a, #20262a) 50% 4px / 6px 1px no-repeat, linear-gradient(#7b8388, #555d61); box-shadow: 0 1px 1px #0006; }
      .steps input.red { background: linear-gradient(#2c1a1c, #2c1a1c) 50% 4px / 6px 1px no-repeat, linear-gradient(#846a6a, #6a5153); }
      .roll { width: 257px; height: 30px; margin-left: 9px; border: 1px solid #343c43; background: #40484f; }
      .roll svg { display: block; width: 100%; height: 100%; }`;
  }
  markup() {
    const no = this.attr("no");
    const roll = no === "4";
    const steps = Array.from({ length: 16 }, (_, i) =>
      `<input type="checkbox" class="${(i >> 2) % 2 ? "red" : ""}" aria-label="Step ${i + 1}">`).join("");
    return `
      <daw-led></daw-led>
      <span class="vol"><daw-knob angle="0"></daw-knob></span>
      <span class="pan"><daw-knob angle="${this.attr("pan")}"></daw-knob></span>
      <div class="no">${no}</div>
      <button class="name"><span>${this.attr("name")}</span>${this.hasAttribute("icon") ? icon(this.attr("icon"), 17) : ""}</button>
      <div class="sel ${roll ? "on" : ""}"></div>
      ${roll ? `<div class="roll"><svg viewBox="0 0 256 28" fill="#9bd0a8"><path d="M1 11h16v6H1zM49 11h16v6H49zM97 11h16v6H97zM145 11h16v6h-16zM162 11h15v6h-15z"/></svg></div>` : `<div class="steps">${steps}</div>`}`;
  }
}

class ChannelRack extends DawElement {
  styles() {
    return `
      :host { background: #454e54; padding: 0 4px; border-left: 2px solid #30393f; }
      header { display: flex; align-items: center; height: 28px; color: #969da1; font: 13px ${WIDE}; padding: 0 5px; white-space: nowrap; }
      header span { color: #747d82; margin-left: 4px; }
      select { flex: none; appearance: none; width: 82px; height: 21px; padding-left: 3px; margin: 0 12px 0 57px; border: 1px solid #30393e; background: #384146; font: 12px ${WIDE}; color: #747d82; }
      .grip { width: 3px; height: 15px; margin-right: 11px; border-left: 2px dotted #6a7378; }
      .swing { margin: 0 12px 0 22px; display: flex; }
      .field { flex: none; width: 36px; height: 21px; border: 1px solid #363f44; border-radius: 4px; }
      .tail { display: flex; align-items: center; gap: 7px; margin-left: auto; }
      .rows { padding-top: 18px; background: #5f696e; border: 1px solid #3a4348; border-bottom: 0; height: 529px; overflow: hidden; }`;
  }
  markup() {
    return `
      <header>${icon("right", 13)}<i style="width:14px"></i>${icon("spin", 15)}
        <select aria-label="Filter"><option>Unsorted</option></select><i class="grip"></i>
        ${icon("speaker", 15)}<span>Channel rack</span>
        <div class="swing"><daw-knob size="16" ring="#b46a48" half="left"></daw-knob></div>
        <div class="field"></div>
        <div class="tail">${icon("undo", 12)}${icon("bars", 15)}${icon("steps", 16, 'style="color:#a8863c"')}${icon("close", 11)}</div>
      </header>
      <div class="rows">${CHANNELS.map(([no, name, color, pan, ic]) =>
        `<channel-row no="${no}" name="${name}" color="${color}" pan="${pan}" ${ic ? `icon="${ic}"` : ""}></channel-row>`).join("")}</div>`;
  }
}

/* ---------- mixer ---------- */
class MixerStrip extends DawElement {
  get data() { return STRIPS[Number(this.attr("index"))]; }
  styles() {
    const d = this.data;
    return `
      :host { flex: none; width: 44px; background: ${d.body}; box-shadow: inset -1px 0 #0002; overflow: hidden; }
      .head { display: flex; flex-direction: column; align-items: center; height: 39px; background: ${d.head}; color: #0009; font-size: 14px; line-height: 18px; }
      .head daw-icon { color: ${d.text}; margin-top: 3px; }
      .head.master { background: repeating-linear-gradient(45deg, #0000 0 2px, #0001 2px 3px) ${d.head}; color: #f0f4f2; font-weight: bold; }
      .top { display: flex; height: 60px; padding: 5px 5px 5px 4px; justify-content: space-between; background: linear-gradient(#0000, #0002); }
      .name { writing-mode: vertical-rl; transform: rotate(180deg); font-size: 11px; line-height: 18px; height: 50px; color: ${d.text}; white-space: nowrap; }
      .meter { width: 14px; height: 50px; border: 1px solid #222a30; border-radius: 2px; background: linear-gradient(#222a30, #222a30) 50% 7px / 8px 1px no-repeat #38414a; }
      .master.meter { outline: 2px solid #a5e43c; border-color: ${d.body}; }
      .led, .big { display: flex; justify-content: center; align-items: center; height: 19px; background: #0002; }
      .big { height: 40px; background: linear-gradient(#0002 60%, #0000 60%); }
      .ctl { display: grid; grid-template-columns: 24px 1fr; height: 148px; }
      .ctl .col { display: flex; flex-direction: column; align-items: center; color: #b3b9bd; }
      .col > * { display: flex; align-items: center; }
      input { appearance: none; writing-mode: vertical-lr; direction: rtl; width: 16px; height: 137px; margin-top: 7px; background: linear-gradient(#0005, #0005) 50% 50% / 3px 100% no-repeat; }
      input.master { background: linear-gradient(#0005 20%, #8cc83c 20%) 50% 50% / 3px 100% no-repeat; }
      input::-webkit-slider-thumb { appearance: none; width: 13px; height: 24px; border-radius: 2px; border: 1px solid #50545a; background: linear-gradient(#a4a5ad, #d8d9df 40%, #303238 48%, #8d8f97 56%, #44464e 64% 78%, #9a9ba4); }
      input.master::-webkit-slider-thumb { border-color: #50801c; background: linear-gradient(#86c82c, #ccf470 40%, #3c6808 48%, #86c82c 56%, #3f7000 64% 78%, #86c82c); }
      .foot { display: flex; flex-direction: column; align-items: center; gap: 5px; padding-top: 13px; color: #b3b9bd; height: 75px; }`;
  }
  markup() {
    const d = this.data;
    const m = d.master ? "master" : "";
    const dim = "color:#ffffff28";
    const half = d.ring === "#7c50ff" ? "right" : "corner";
    return `
      <div class="head ${m}">${d.no || "&nbsp;"}${d.icon ? icon(d.icon, 15) : ""}</div>
      <div class="top"><div class="name">${d.name}</div><div class="meter ${m}"></div></div>
      <div class="led"><daw-led></daw-led></div>
      <div class="big"><daw-knob size="22" halo></daw-knob></div>
      <div class="ctl">
        <div class="col">
          <span style="height:16px;${d.stereo ? "color:#6cc4ff" : ""}">${icon("vsplit", 10)}</span>
          <span style="height:18px">${icon("hsplit", 13)}</span>
          <span style="height:22px"><daw-knob size="12" halo ${d.ring ? `ring="${d.ring}" half="${half}"` : ""}></daw-knob></span>
          <span style="height:36px"></span>
          <span style="height:18px;${d.send ? "color:#ffba38" : dim}">${icon("send", 14)}</span>
          <span style="height:26px;${d.clock ? "color:#ffba38" : ""}">${icon("clock", 13)}</span>
          <span style="height:12px"><i style="width:6px;height:6px;border-radius:50%;background:#b3b9bd"></i></span>
        </div>
        <input class="${m}" type="range" value="${d.fader}" aria-label="${d.name} volume">
      </div>
      <div class="foot">
        <span style="height:10px">${d.up ? icon("chevup", 9) : ""}</span>
        ${d.master ? icon("down", 12, 'style="color:#a5e43c"') : icon("tri", 11, `style="${dim}"`)}
      </div>`;
  }
}

class MixerPanel extends DawElement {
  styles() {
    return `
      :host { display: flex; flex-direction: column; background: #454e54; border-left: 2px solid #30393f; border-top: 1px solid #343d42; padding-left: 4px; }
      header { display: flex; align-items: center; gap: 8px; height: 27px; padding-left: 4px; color: #969da1; font: 12px ${WIDE}; }
      header span { color: #8a9297; }
      .strips { display: flex; height: 382px; margin: 0 0 6px 2px; overflow: hidden; background: #2a3238; border-bottom: 1px solid #293136; }
      .scale { flex: none; width: 44px; background: #3a424a; color: #a4acb1; }
      .scale .top { height: 39px; background: #656d74; color: #343c42; text-align: center; font-size: 14px; line-height: 18px; }
      .meter { display: flex; flex-direction: column; width: 28px; height: 198px; margin: 5px 8px 8px; padding-top: 6px; border: 1px solid #242c32; border-radius: 2px; background: #384048; font: 7px/14px ${WIDE}; text-align: center; color: #7f888e; }
      .meter span { border-bottom: 1px solid #2a3238; margin: 0 5px; }
      .scale .under { display: flex; flex-direction: column; align-items: center; gap: 29px; color: #5c656c; }
      .under i { width: 6px; height: 6px; border-radius: 50%; background: #b3b9bd; }
      .gap { flex: none; background: #333b42; }`;
  }
  markup() {
    const marks = ["3", "0", "3", "6", "9", "12", "15", "18", "21", "24"];
    return `
      <header>${icon("right", 13)}${icon("hand", 15)}${icon("stand", 14)}${icon("swap", 14, 'style="color:#5a8cac"')}${icon("dock", 14, 'style="color:#a8863c"')}${icon("plus", 11)}<span>Wide</span><i style="width:28px"></i>${icon("right", 11)}</header>
      <div class="strips">
        <div class="scale"><div class="top">C</div><div class="meter">${marks.map((m) => `<span>${m}</span>`).join("")}</div>
          <div class="under">${icon("send", 14)}<i></i></div></div>
        ${STRIPS.map((s, i) => s.gap ? `<div class="gap" style="width:${s.gap}px"></div>` : `<mixer-strip index="${i}"></mixer-strip>`).join("")}
      </div>`;
  }
}

/* ---------- playlist ---------- */
class PatternPicker extends DawElement {
  styles() {
    return `
      :host { display: flex; flex-direction: column; width: 156px; }
      .tabs { display: flex; align-items: center; gap: 30px; height: 57px; padding: 29px 0 0 15px; color: #4f585f; }
      .box { display: flex; height: 860px; border: 1px solid #262e34; border-width: 1px 0; background: #343c43; }
      .list { display: flex; flex-direction: column; gap: 3px; flex: 1; padding: 3px 2px 0 4px; overflow: hidden; }
      .item { flex: none; display: grid; height: 28px; border: 1px solid #0003; border-radius: 2px; font-size: 12px; line-height: 24px; white-space: nowrap; }
      .item > * { grid-area: 1 / 1; }
      .item span { display: flex; align-items: center; gap: 3px; padding-left: 2px; }
      .item svg { width: 100%; height: 26px; }
      .item.on { position: relative; border-color: #a5e43c; }
      .item.on::before { content: ""; position: absolute; left: -2px; top: 7px; border: 6px solid transparent; border-left-color: #e83c5c; border-right: 0; }
      .bar { width: 15px; display: flex; flex-direction: column; gap: 1px; background: #2b3339; color: #20282d; }
      .bar button { height: 14px; background: #4c555c; border: 1px solid #5c656c; }
      .bar i { height: 32px; background: #545d64; border: 1px solid #656e75; }
      .bar button:last-child { margin-top: auto; }
      .add { height: 19px; color: #c6ccd0; width: 100%; padding-right: 15px; }`;
  }
  markup() {
    return `
      <div class="tabs">${icon("piano", 17, 'style="color:#e0e5e8"')}${icon("wave", 19)}${icon("auto", 16)}</div>
      <div class="box">
        <div class="list">${PATTERNS.map(([name, c, notes], i) => `
          <div class="item ${i ? "" : "on"}" style="background:linear-gradient(#ffffff0c,#0000000c) ${COLORS[c][0]};color:${COLORS[c][1]}">
            ${noteShapes(notes, COLORS[c][2], 0.3)}<span>${icon("pattern", 9)}${name}</span></div>`).join("")}</div>
        <div class="bar"><button aria-label="Menu"></button><button aria-label="Up">${icon("caretup", 9)}</button><i></i><button aria-label="Down">${icon("caretdown", 9)}</button></div>
      </div>
      <button class="add" aria-label="Add pattern">${icon("plus", 9)}</button>`;
  }
}

class TrackHeader extends DawElement {
  get data() { return TRACKS[Number(this.attr("index"))]; }
  styles() {
    const d = this.data;
    if (!d.name) {
      return `:host {
          display: flex; align-items: center; gap: 7px; height: 16px; padding: 0 5px 0 2px; border-radius: 0 6px 6px ${d.blank ? "6px" : "0"};
          background: ${d.blank ? "#403e4a" : "#aabacc"}; color: #2c3a48; font-size: 10px; line-height: 15px;
        }
        span { flex: 1; }`;
    }
    return `
      :host { display: flex; flex-direction: column; justify-content: space-between; height: 54px; margin-left: 6px; padding: 0 5px 3px 2px;
        background: ${d.color}; color: #f4efe8; font-size: 13px; line-height: 17px; border-radius: 0 0 ${d.last ? "6px" : 0} 0; }
      .row { display: flex; align-items: center; gap: 7px; }
      .row span { flex: 1; padding-left: 5px; color: #0006; font-weight: bold; font-size: 12px; line-height: 12px; }`;
  }
  markup() {
    const d = this.data;
    if (!d.name) return `<span>${d.group || ""}</span>${d.fold ? icon("fold", 9) : ""}<daw-led></daw-led>`;
    return `${d.name}<div class="row"><span>...</span>${icon(d.icon, 17)}<daw-led></daw-led></div>`;
  }
}

class PatternClip extends DawElement {
  styles() {
    const [head, text] = COLORS[this.attr("color")];
    const start = Math.round((Number(this.attr("bar")) - 1) * 4) + 1;
    const span = Math.round(Number(this.attr("bars")) * 4);
    const roomy = span > 16 && this.attr("name").length < 16;
    return `
      :host { grid-column: ${start} / span ${span}; height: 53px; overflow: hidden; }
      .head { display: flex; align-items: center; gap: 2px; height: 15px; padding-left: 1px; overflow: hidden; border: 1px solid #0003; border-radius: 2px;
        background: linear-gradient(#ffffff10, #00000010) ${head}; color: ${text}; font-size: ${roomy ? 11 : 10}px; line-height: 13px; white-space: nowrap; }
      .body { height: 38px; background: ${this.attr("body")}; opacity: .9; }
      svg { display: block; width: 100%; height: 38px; }`;
  }
  markup() {
    const c = this.attr("color");
    const slim = Number(this.attr("bars")) < 0.5;
    return `<div class="head">${slim ? "" : icon(c === "mute" ? "close" : "pattern", 8)}${this.attr("name")}</div>
      <div class="body">${noteShapes(this.attr("notes"), COLORS[c][2])}</div>`;
  }
}

class TrackLane extends DawElement {
  styles() {
    const tall = TRACKS[Number(this.attr("index"))].name;
    return `:host { display: grid; grid-template-columns: repeat(280, minmax(0, 1fr)); height: ${tall ? 54 : 16}px; border-bottom: 1px solid #14222b; }`;
  }
  markup() {
    const t = TRACKS[Number(this.attr("index"))];
    return (t.clips || []).map(([name, color, bar, bars, notes]) =>
      `<pattern-clip name="${name}" color="${color}" bar="${bar}" bars="${bars}" notes="${notes}" body="${t.body}" style="grid-row:1"></pattern-clip>`).join("");
  }
}

class SongOverview extends DawElement {
  styles() {
    return `:host { height: 19px; border: 1px solid #6d797e; background: #4f5f66; }
      svg { display: block; width: 100%; height: 17px; }`;
  }
  markup() {
    let y = 0;
    const rects = [];
    TRACKS.forEach((t) => {
      (t.clips || []).forEach(([, c, bar, bars]) => {
        rects.push(`<rect x="${(bar - 1) * 10}" y="${y}" width="${bars * 10}" height="1" fill="${c === "dark" ? "#6c5662" : COLORS[c][0]}"/>`);
      });
      y += t.name ? 1.3 : 0.2;
    });
    const flags = [1, 5, 21, 37, 45, 61].map((b) => `<path d="M${(b - 1) * 10} 0h5l-5 5z" fill="#f4f09a"/>`).join("");
    return `<svg viewBox="0 0 700 18" preserveAspectRatio="none" aria-hidden="true">${rects.join("")}${flags}</svg>`;
  }
}

class TimeRuler extends DawElement {
  styles() {
    return `
      :host { display: grid; grid-template: 20px 17px / repeat(70, minmax(0, 1fr)); height: 38px; background: #202b32; border-bottom: 1px solid #3a464d; }
      span { grid-row: 1; font: 10px/24px ${WIDE}; color: #95a2a9; white-space: nowrap; }
      b { grid-row: 2; justify-self: start; height: 17px; padding: 0 14px 0 1px; font-weight: 400; font-size: 12px; line-height: 16px; color: #cfd8dc; background: #37434a; white-space: nowrap;
        clip-path: polygon(0 0, calc(100% - 14px) 0, calc(100% - 9px) 3px, 100% 100%, 0 100%); }
      i { grid-area: 1 / 1; width: 0; height: 0; border: 4px solid; border-color: #a8e070 transparent transparent #a8e070; }`;
  }
  markup() {
    const bars = Array.from({ length: 18 }, (_, i) => i * 4 + 1);
    const marks = [["Intro", 1], ["Verse", 5], ["Chorus", 21], ["Bridge", 37], ["Verse", 45], ["Outro", 61]];
    return bars.map((b) => `<span style="grid-column:${b} / span ${b === 69 ? 2 : 4}">${b}</span>`).join("") +
      marks.map(([name, b]) => `<b style="grid-column:${b} / span 8">${name}</b>`).join("") + "<i></i>";
  }
}

class PlaylistPanel extends DawElement {
  styles() {
    return `
      :host { display: flex; flex-direction: column; background: #40474e; border: 1px solid #2b343a; padding: 0 5px 7px; }
      header { display: flex; align-items: center; height: 27px; padding: 0 3px; color: #d8dee2; font: 13px ${WIDE}; }
      header .tools { display: flex; gap: 5px; margin: 0 20px 0 18px; }
      header .win { display: flex; gap: 9px; margin-left: auto; align-items: center; }
      header span { margin: 0 6px; }
      .win i { width: 7px; height: 2px; background: #d8dee2; margin-bottom: 6px; }
      .win b { width: 9px; height: 8px; border: 1px solid #d8dee2; border-top-width: 3px; }
      .main { display: grid; grid-template-columns: 162px 111px minmax(0, 1fr) 20px; }
      .corner { display: flex; height: 57px; }
      .slant { display: flex; align-items: flex-end; justify-content: center; width: 30px; padding: 0 0 7px 4px; background: #4f575d; clip-path: polygon(0 100%, 12px 6px, 18px 0, 100% 0, 100% 100%); }
      .modes { flex: 1; display: grid; grid-template: 18px 1fr / 1fr 1fr 1fr; justify-items: center; align-items: center; background: #4f575d; border: 1px solid #2b343a; border-width: 0 1px; color: #717a80; font: bold 7px ${WIDE}; padding: 0 2px; }
      .modes span { align-self: end; padding-bottom: 4px; }
      .modes .on { color: #e4e8ea; }
      .heads { background: #20292f; width: 100px; }
      .over { display: grid; grid-template-columns: 20px minmax(0, 723fr) minmax(0, 145fr) 20px; height: 19px; }
      .over button, .bar button { background: #4c555c; border: 1px solid #626b72; color: #20282e; }
      .lanes {
        border-top: 1px solid #14222b;
        background:
          repeating-linear-gradient(90deg, #182730 0 1px, transparent 1px calc(100% / 70)),
          repeating-linear-gradient(90deg, #33434d 0 calc(100% * 4 / 70), #2d3c47 0 calc(100% * 8 / 70));
      }
      .strip { display: flex; background: #2e3940; border-right: 1px solid #182730; padding-top: 1px; }
      .bar { display: flex; flex-direction: column; background: #353c42; }
      .bar button { height: 19px; }
      .bar i { height: 33px; background: #4c555c; border: 1px solid #626b72; }
      .bar button:last-child { margin-top: auto; }`;
  }
  markup() {
    const tools = ["brush", "slash", "mute", "slip", "slice", "select", "zoom", "play2"];
    return `
      <header>${icon("right", 13)}<i style="width:6px"></i>${icon("magnet", 16, 'style="color:#6ce49c"')}
        <div class="tools">${[icon("pencil", 16, 'style="color:#f4a82c"'), ...tools.map((n) => icon(n, 16))].join("")}</div>
        ${icon("speaker", 15)}<span>Playlist - Arrangement</span>${icon("right", 11)}<span>SideStick</span>${icon("right", 11)}
        <div class="win"><i></i><b></b>${icon("close", 11)}</div>
      </header>
      <div class="main">
        <pattern-picker></pattern-picker>
        <div>
          <div class="corner">
            <div class="slant">${icon("plus", 9)}</div>
            <div class="modes">${icon("wave", 18)}${icon("auto", 15)}${icon("piano", 15, 'class="on"')}<span>NOTE</span><span>CHAN</span><span class="on">PAT</span></div>
          </div>
          <div class="strip"><div class="heads">${TRACKS.map((_, i) => `<track-header index="${i}"></track-header>`).join("")}</div></div>
        </div>
        <div>
          <div class="over"><button aria-label="Scroll left">${icon("caretleft", 10)}</button><song-overview></song-overview><span></span><button aria-label="Scroll right" style="color:#d0d6da">${icon("caretright", 10)}</button></div>
          <time-ruler></time-ruler>
          <div class="lanes">${TRACKS.map((_, i) => `<track-lane index="${i}"></track-lane>`).join("")}</div>
        </div>
        <div class="bar"><button aria-label="Menu"></button><button aria-label="Scroll up">${icon("caretup", 10)}</button><i></i><button aria-label="Scroll down">${icon("caretdown", 10)}</button></div>
      </div>`;
  }
}

class DawApp extends DawElement {
  styles() {
    return `
      :host { margin: 19px 24px 27px 23px; background: #30393f; box-shadow: 0 4px 16px #0004; }
      .work { display: grid; grid-template-columns: 207px 499px minmax(0, 1fr); border-top: 1px solid #30393f; }`;
  }
  markup() {
    return `
      <main-toolbar></main-toolbar>
      <sub-toolbar></sub-toolbar>
      <div class="work">
        <browser-panel></browser-panel>
        <div><channel-rack></channel-rack><mixer-panel></mixer-panel></div>
        <playlist-panel></playlist-panel>
      </div>`;
  }
}

customElements.define("daw-icon", DawIcon);
customElements.define("daw-led", DawLed);
customElements.define("daw-knob", DawKnob);
customElements.define("tool-button", ToolButton);
customElements.define("main-toolbar", MainToolbar);
customElements.define("sub-toolbar", SubToolbar);
customElements.define("browser-panel", BrowserPanel);
customElements.define("channel-row", ChannelRow);
customElements.define("channel-rack", ChannelRack);
customElements.define("mixer-strip", MixerStrip);
customElements.define("mixer-panel", MixerPanel);
customElements.define("pattern-picker", PatternPicker);
customElements.define("track-header", TrackHeader);
customElements.define("pattern-clip", PatternClip);
customElements.define("track-lane", TrackLane);
customElements.define("song-overview", SongOverview);
customElements.define("time-ruler", TimeRuler);
customElements.define("playlist-panel", PlaylistPanel);
customElements.define("daw-app", DawApp);
</script>
</body>
</html>
